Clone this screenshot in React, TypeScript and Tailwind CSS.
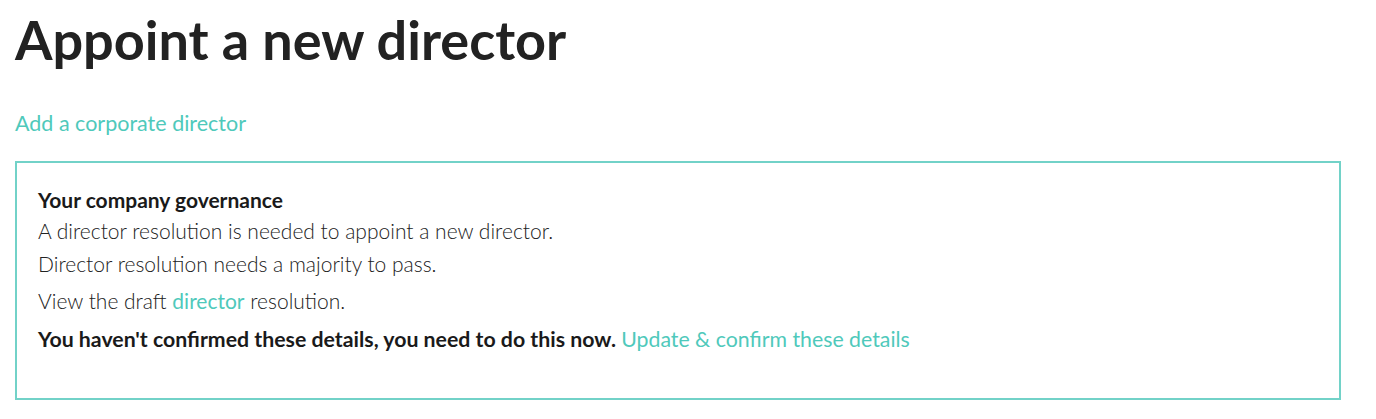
import React from 'react';

const App: React.FC = () => {
  return (
    <div className="min-h-screen bg-white px-[15px] pt-[8px] font-['Lato','Liberation_Sans',sans-serif] text-[#222]">
      {/* Header */}
      <h1 className="text-[54px] font-bold leading-[64px] text-[#222]">
        Appoint a new director
      </h1>
      <a href="#" className="mt-[37px] block text-[21.5px] leading-[28px] text-[#4fc9bb]">
        Add a corporate director
      </a>

      {/* Governance box */}
      <div className="mt-[24px] mr-[20px] h-[239px] border-2 border-[#72d2c8] px-[21px] pt-[23px]">
        <p className="text-[21px] font-bold leading-[28px] text-[#1a1a1a]">Your company governance</p>
        <p className="mt-[3px] text-[21px] font-light leading-[28px] text-[#222]">
          A director resolution is needed to appoint a new director.
        </p>
        <p className="mt-[5px] text-[21px] font-light leading-[28px] text-[#222]">
          Director resolution needs a majority to pass.
        </p>
        <p className="mt-[9px] text-[21px] font-light leading-[28px] text-[#222]">
          View the draft{' '}
          <a href="#" className="font-normal text-[#4fc9bb]">
            director
          </a>{' '}
          resolution.
        </p>
        <p className="mt-[10px] text-[21.3px] font-bold leading-[28px] text-[#1a1a1a]">
          You haven't confirmed these details, you need to do this now.{' '}
          <a href="#" className="font-normal text-[#4fc9bb]">
            Update &amp; confirm these details
          </a>
        </p>
      </div>
    </div>
  );
};

export default App;
